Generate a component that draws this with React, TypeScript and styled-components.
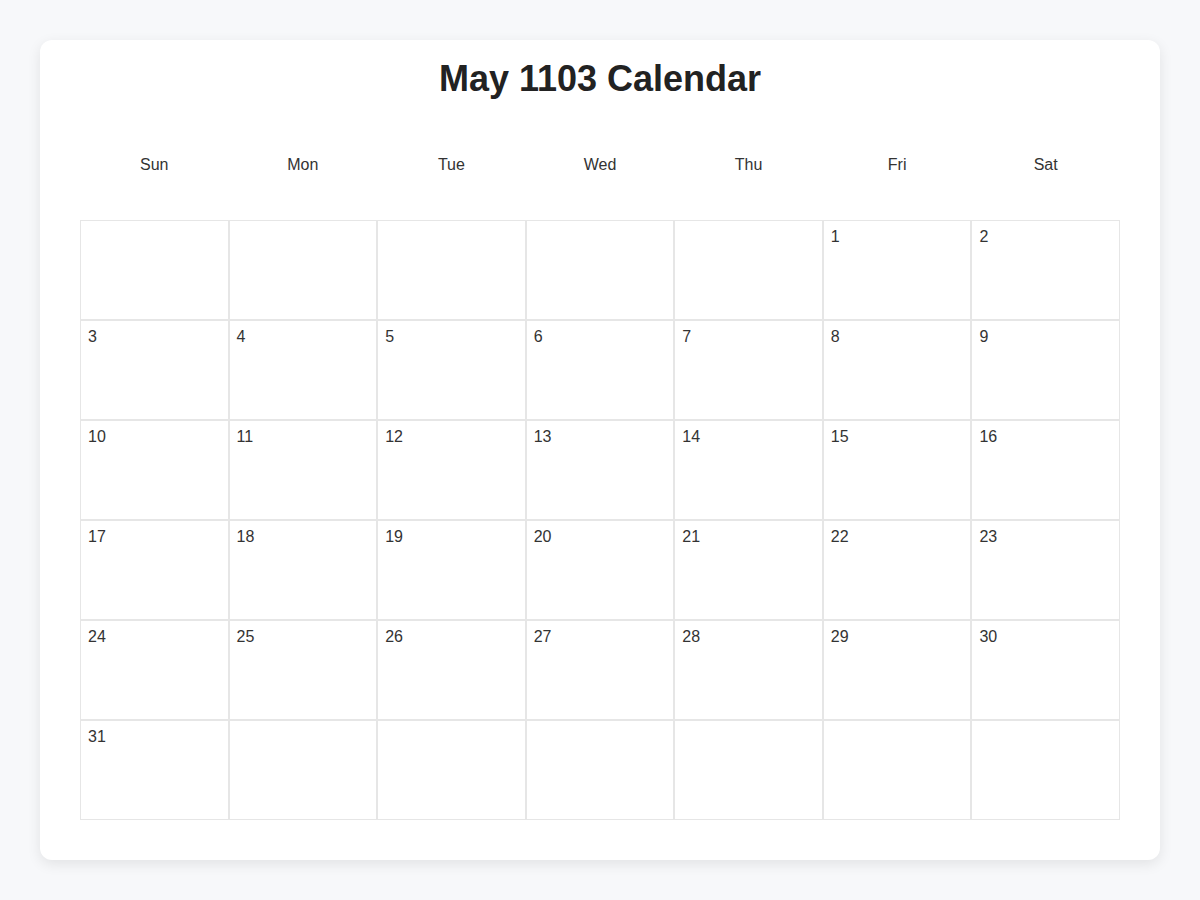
import styled, { createGlobalStyle } from "styled-components";

const GlobalStyle = createGlobalStyle`
  * { box-sizing: border-box; }
  body {
    margin: 0;
    background: #f7f8fa;
    font-family: "Liberation Sans", Arial, sans-serif;
    color: #333;
  }
`;

const Page = styled.div`
  padding: 40px;
`;

const Card = styled.div`
  background: #fff;
  border-radius: 12px;
  box-shadow: 0 4px 14px rgba(0, 0, 0, 0.09);
  padding: 18px 40px 40px;
`;

const Title = styled.h1`
  margin: 0;
  font-size: 36px;
  line-height: 42px;
  font-weight: 700;
  color: #222;
  text-align: center;
`;

const WeekRow = styled.div`
  display: grid;
  grid-template-columns: repeat(7, 1fr);
  margin: 41px 0 31px;
`;

const WeekDay = styled.div`
  text-align: center;
  font-size: 16px;
  line-height: 18px;
  padding: 15px 0;
  color: #333;
`;

const Grid = styled.div`
  display: grid;
  grid-template-columns: repeat(7, 1fr);
`;

const Cell = styled.div`
  height: 100px;
  border: 1px solid #e6e6e6;
  padding: 7px 7px;
  font-size: 16px;
  line-height: 18px;
  color: #333;
`;

const days = ["Sun", "Mon", "Tue", "Wed", "Thu", "Fri", "Sat"];

export default function App() {
  const firstDay = 5; // May 1103 starts on a Friday here
  const total = 31;
  const cells: (number | null)[] = [];
  for (let i = 0; i < firstDay; i++) cells.push(null);
  for (let d = 1; d <= total; d++) cells.push(d);
  while (cells.length % 7 !== 0) cells.push(null);

  return (
    <>
      <GlobalStyle />
      <Page>
        <Card>
          <Title>May 1103 Calendar</Title>
          <WeekRow>
            {days.map((d) => (
              <WeekDay key={d}>{d}</WeekDay>
            ))}
          </WeekRow>
          <Grid>
            {cells.map((c, i) => (
              <Cell key={i}>{c ?? ""}</Cell>
            ))}
          </Grid>
        </Card>
      </Page>
    </>
  );
}
